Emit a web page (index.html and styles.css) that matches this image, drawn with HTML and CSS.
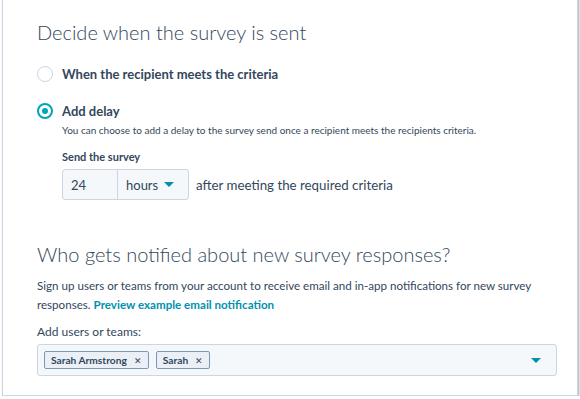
FILE: index.html
```html
<!DOCTYPE html>
<html lang="en">
<head>
    <meta charset="UTF-8">
    <title>Survey settings</title>
    <link rel="stylesheet" href="styles.css">
</head>
<body>
    <div class="card">
        <h2 class="section-title">Decide when the survey is sent</h2>

        <label class="radio-row">
            <span class="radio"></span>
            <span class="radio-label">When the recipient meets the criteria</span>
        </label>

        <label class="radio-row checked">
            <span class="radio"></span>
            <span class="radio-label">Add delay</span>
        </label>

        <div class="delay">
            <p class="help">You can choose to add a delay to the survey send once a recipient meets the recipients criteria.</p>
            <div class="field-label">Send the survey</div>
            <div class="delay-row">
                <div class="input-group">
                    <div class="num">24</div>
                    <div class="unit">hours <span class="caret"></span></div>
                </div>
                <span class="after">after meeting the required criteria</span>
            </div>
        </div>

        <h2 class="section-title second">Who gets notified about new survey responses?</h2>
        <p class="desc">Sign up users or teams from your account to receive email and in-app notifications for new survey responses. <a href="#" class="link">Preview example email notification</a></p>
        <div class="add-label">Add users or teams:</div>
        <div class="select">
            <span class="tag">Sarah Armstrong <span class="x">&#x2715;</span></span>
            <span class="tag">Sarah <span class="x">&#x2715;</span></span>
            <span class="caret big"></span>
        </div>
    </div>
</body>
</html>
```

FILE: styles.css
```css
body {
    margin: 0;
    background: #fff;
    font-family: Lato, "Open Sans", sans-serif;
    color: #33475b;
}
.card {
    width: 576px;
    height: 398px;
    margin: -2px 0 0 2px;
    box-sizing: border-box;
    border: 1px solid #cbd6e2;
    border-top: none;
    box-shadow: 1px 1px 2px rgba(0,0,0,0.35);
    padding: 20px 34px 0 34px;
}
.section-title {
    font-size: 20px;
    font-weight: 300;
    margin: 0 0 19px 0;
    line-height: 28px;
}
.section-title.second {
    margin-top: 40px;
    margin-bottom: 8px;
}
.radio-row {
    display: flex;
    align-items: center;
    height: 18px;
    margin-bottom: 19px;
}
.radio {
    width: 16px;
    height: 16px;
    border: 1px solid #cbd6e2;
    border-radius: 50%;
    box-sizing: border-box;
    margin-right: 9px;
    display: flex;
    align-items: center;
    justify-content: center;
    flex-shrink: 0;
}
.checked .radio {
    border: 2px solid #00a4bd;
}
.checked .radio::after {
    content: "";
    width: 6px;
    height: 6px;
    border-radius: 50%;
    background: #00a4bd;
}
.radio-row.checked {
    margin-bottom: 0;
}
.radio-label {
    font-size: 13px;
    font-weight: 700;
}
.delay {
    padding-left: 25px;
}
.help {
    font-size: 10px;
    margin: 3px 0 0 0;
    line-height: 14px;
}
.field-label {
    font-size: 11px;
    font-weight: 700;
    margin-top: 12px;
    line-height: 16px;
}
.delay-row {
    display: flex;
    align-items: center;
    margin-top: 4px;
}
.input-group {
    display: flex;
    height: 31px;
    border: 1px solid #cbd6e2;
    border-radius: 3px;
    background: #f5f8fa;
    box-sizing: border-box;
    font-size: 13px;
}
.num {
    width: 55px;
    padding-left: 8px;
    box-sizing: border-box;
    display: flex;
    align-items: center;
    border-right: 1px solid #cbd6e2;
}
.unit {
    width: 70px;
    padding-left: 8px;
    box-sizing: border-box;
    display: flex;
    align-items: center;
}
.caret {
    display: inline-block;
    width: 0;
    height: 0;
    border-left: 5px solid transparent;
    border-right: 5px solid transparent;
    border-top: 5px solid #0091ae;
    margin-left: 6px;
}
.after {
    font-size: 13.3px;
    margin-left: 7px;
}
.desc {
    font-size: 11.6px;
    line-height: 19px;
    margin: 0;
}
.link {
    display: inline-block;
    color: #0091ae;
    font-weight: 700;
    text-decoration: none;
}
.add-label {
    font-size: 12px;
    margin-top: 10px;
    line-height: 16px;
}
.select {
    margin-top: 4px;
    width: 520px;
    height: 32px;
    box-sizing: border-box;
    border: 1px solid #cbd6e2;
    border-radius: 3px;
    background: #f5f8fa;
    display: flex;
    align-items: center;
    padding-left: 6px;
    gap: 7px;
}
.tag {
    font-size: 10.2px;
    font-weight: 700;
    border: 1px solid #7c98b6;
    border-radius: 2px;
    background: #eaf0f6;
    height: 18px;
    box-sizing: border-box;
    padding: 0 6px;
    display: flex;
    align-items: center;
}
.x {
    font-weight: 400;
    font-size: 9px;
    margin-left: 7px;
}
.caret.big {
    margin-left: auto;
    margin-right: 15px;
}
```
